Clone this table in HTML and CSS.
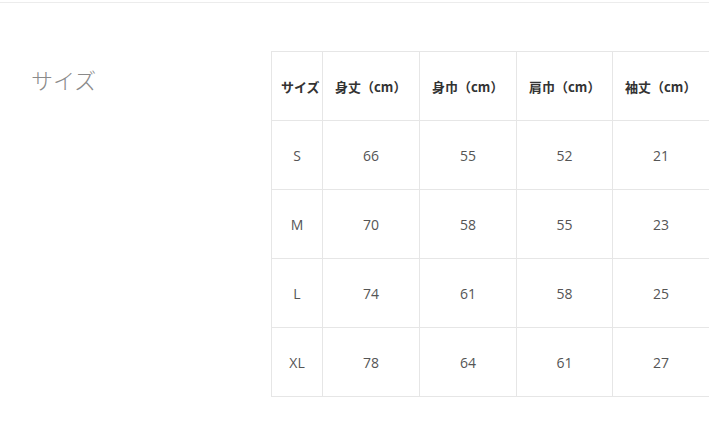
FILE: index.html
```html
<!DOCTYPE html>
<html lang="ja">
<head>
<meta charset="utf-8">
<link rel="stylesheet" href="styles.css">
</head>
<body>
<div class="topline"></div>
<section class="size-section">
  <h2 class="size-title">サイズ</h2>
  <table class="size-table">
    <colgroup>
      <col class="c1"><col class="c2"><col class="c2"><col class="c3"><col class="c2">
    </colgroup>
    <thead>
      <tr><th>サイズ</th><th>身丈（cm）</th><th>身巾（cm）</th><th>肩巾（cm）</th><th>袖丈（cm）</th></tr>
    </thead>
    <tbody>
      <tr><td>S</td><td>66</td><td>55</td><td>52</td><td>21</td></tr>
      <tr><td>M</td><td>70</td><td>58</td><td>55</td><td>23</td></tr>
      <tr><td>L</td><td>74</td><td>61</td><td>58</td><td>25</td></tr>
      <tr><td>XL</td><td>78</td><td>64</td><td>61</td><td>27</td></tr>
    </tbody>
  </table>
</section>
</body>
</html>
```
FILE: styles.css
```css
html, body {
  margin: 0;
  padding: 0;
  background: #fff;
  font-family: "Open Sans", "Noto Sans CJK JP", sans-serif;
}
.topline {
  height: 2px;
  border-bottom: 1px solid #ececec;
}
.size-section {
  display: flex;
  align-items: flex-start;
  padding-top: 48px;
}
.size-title {
  flex: none;
  width: 240px;
  margin: 16px 0 0 0;
  padding-left: 31px;
  font-family: "Noto Sans CJK JP", sans-serif;
  font-size: 22px;
  line-height: 24px;
  font-weight: 300;
  color: #8a8a8a;
}
.size-table {
  flex: none;
  border-collapse: collapse;
  table-layout: fixed;
  width: 438px;
}
.size-table .c1 { width: 51px; }
.size-table .c2 { width: 97px; }
.size-table .c3 { width: 96px; }
.size-table th,
.size-table td {
  border: 1px solid #e6e6e6;
  height: 69px;
  padding: 0 12px;
  box-sizing: border-box;
  white-space: nowrap;
  vertical-align: middle;
}
.size-table th {
  font-family: "Noto Sans CJK JP", sans-serif;
  font-size: 13px;
  font-weight: 700;
  color: #333;
  text-align: left;
}
.size-table th:first-child {
  padding: 0 0 0 9px;
}
.size-table td {
  font-size: 14px;
  color: #555;
  text-align: center;
}
```
